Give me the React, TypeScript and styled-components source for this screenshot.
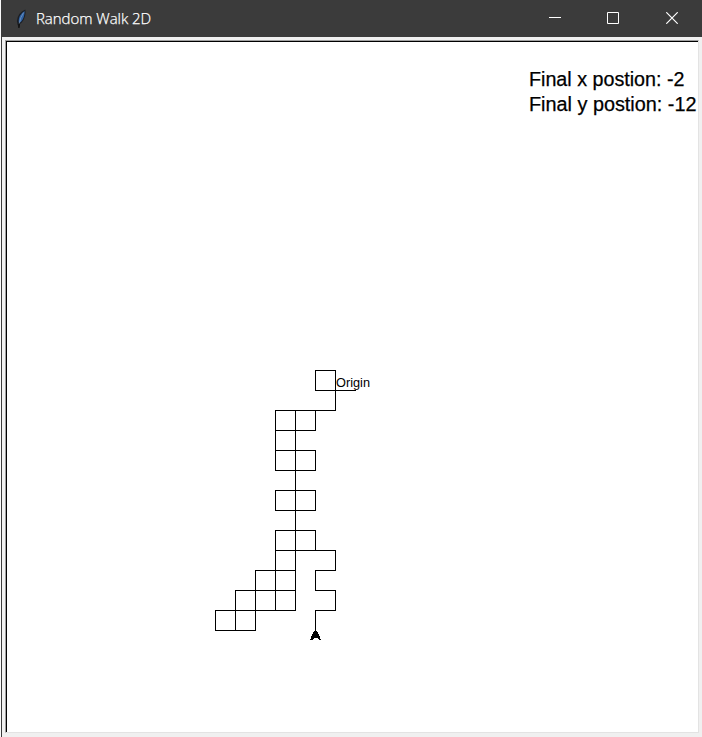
import React from "react";
import styled, { createGlobalStyle } from "styled-components";

const GlobalStyle = createGlobalStyle`
  * { box-sizing: border-box; }
  body { margin: 0; overflow: hidden; background: #fff; }
`;

const Desktop = styled.div`
  width: 702px;
  height: 737px;
  padding-left: 1px;
  background: #fafafa;
`;

const Window = styled.div`
  height: 737px;
  display: flex;
  flex-direction: column;
  border-left: 1px solid #3b3b3b;
  background: #f0f0f0;
`;

const TitleBar = styled.header`
  height: 37px;
  flex: none;
  display: flex;
  align-items: center;
  background: #3b3b3b;
  color: #fff;
`;

const AppIcon = styled.svg`
  width: 16px;
  height: 20px;
  margin-left: 11px;
`;

const Title = styled.h1`
  flex: 1;
  margin: 0 0 2px 7px;
  font: 300 15px/20px "Open Sans", "Noto Sans", sans-serif;
  white-space: nowrap;
  letter-spacing: -0.04px;
  -webkit-text-stroke: 0.25px #fff;
`;

const Controls = styled.div`
  display: flex;
  height: 37px;
`;

const ControlButton = styled.button<{ $width: number }>`
  width: ${(p) => p.$width}px;
  height: 37px;
  padding: 0 0 1px;
  border: 0;
  background: none;
  display: grid;
  place-items: center;

  svg { display: block; width: 12px; height: 12px; }
`;

const Canvas = styled.main`
  width: 694px;
  height: 693px;
  margin: 3px 0 0 3px;
  border: 1px solid;
  border-color: #a0a0a0 #e3e3e3 #e3e3e3 #a0a0a0;
`;

const CanvasInner = styled.div`
  height: 691px;
  border-top: 1px solid #000;
  border-left: 1px solid #000;
  background: #fff;
`;

const Drawing = styled.svg`
  display: block;
  width: 691px;
  height: 690px;
`;

const ResultText = styled.text`
  font: 20px "Liberation Sans", Arial, sans-serif;
  fill: #000;
  stroke: #000;
  stroke-width: 0.25px;
`;

const OriginText = styled.text`
  font: 13px "Liberation Sans", Arial, sans-serif;
  fill: #000;
`;

// Runs of the walk, in steps of 20 canvas units: [x, y, dx, dy].
const runs: number[][] = [
  [315, 370, 20, 0], [315, 370, 0, 20], [315, 390, 40, 0], [335, 370, 0, 40],
  [275, 410, 60, 0], [275, 410, 0, 60], [295, 410, 0, 200], [315, 410, 0, 20],
  [275, 430, 40, 0], [275, 450, 40, 0], [275, 470, 40, 0], [315, 450, 0, 20],
  [275, 490, 40, 0], [275, 510, 40, 0], [275, 490, 0, 20], [315, 490, 0, 20],
  [275, 530, 40, 0], [275, 530, 0, 80], [315, 530, 0, 20], [275, 550, 60, 0],
  [335, 550, 0, 20], [255, 570, 40, 0], [315, 570, 20, 0], [315, 570, 0, 20],
  [235, 590, 60, 0], [315, 590, 20, 0], [335, 590, 0, 20], [215, 610, 80, 0],
  [315, 610, 20, 0], [315, 610, 0, 20], [255, 570, 0, 60], [235, 590, 0, 40],
  [215, 610, 0, 20], [215, 630, 40, 0],
];

const walk = runs.map(([x, y, dx, dy]) => `M${x} ${y}l${dx} ${dy}`).join("");

export default function App() {
  return (
    <Desktop>
      <GlobalStyle />
      <Window>
        <TitleBar>
          <AppIcon viewBox="0 0 16 20">
            <path d="M4.6 16 L3.9 12 Q4.5 4 12.4 .6 Q13.4 8 8.8 13.5 L6.7 15.3 L6.2 18.5 Z" fill="#1b1e24" />
            <path d="M5.7 13.5 Q5.2 6 11.6 2 Q11.8 8.5 7.8 13 Z" fill="#2f62a5" />
            <path d="M6.2 15 Q7.3 8 10.6 3.6" stroke="#7f9dc0" strokeWidth=".7" fill="none" />
            <path d="M5.8 18.8 L6.3 14.5" stroke="#111" strokeWidth="1.5" />
          </AppIcon>
          <Title>Random Walk 2D</Title>
          <Controls>
            <ControlButton $width={58} aria-label="Minimize">
              <svg viewBox="0 0 12 12"><path d="M0 5.5H12" stroke="#fff" /></svg>
            </ControlButton>
            <ControlButton $width={58} aria-label="Maximize">
              <svg viewBox="0 0 12 12"><path d="M.5.5H11.5V11.5H.5Z" stroke="#fff" fill="none" /></svg>
            </ControlButton>
            <ControlButton $width={60} aria-label="Close">
              <svg viewBox="0 0 12 12"><path d="M.3.3L11.7 11.7M11.7.3L.3 11.7" stroke="#fff" strokeWidth="1.2" /></svg>
            </ControlButton>
          </Controls>
        </TitleBar>
        <Canvas>
          <CanvasInner>
            <Drawing viewBox="7 42 691 690">
              <path d={walk} transform="translate(.5 .5)" stroke="#000" strokeLinecap="square" fill="none" shapeRendering="crispEdges" />
              <path d="M315 630H316L318.5 634L321 640H319L317 638H314L312 640H310L312.5 634Z" shapeRendering="crispEdges" />
              <OriginText x="336" y="387" textLength="34" lengthAdjust="spacingAndGlyphs">Origin</OriginText>
              <ResultText x="529" y="86" textLength="155.5" lengthAdjust="spacingAndGlyphs">Final x postion: -2</ResultText>
              <ResultText x="529" y="111" textLength="167.5" lengthAdjust="spacingAndGlyphs">Final y postion: -12</ResultText>
            </Drawing>
          </CanvasInner>
        </Canvas>
      </Window>
    </Desktop>
  );
}
